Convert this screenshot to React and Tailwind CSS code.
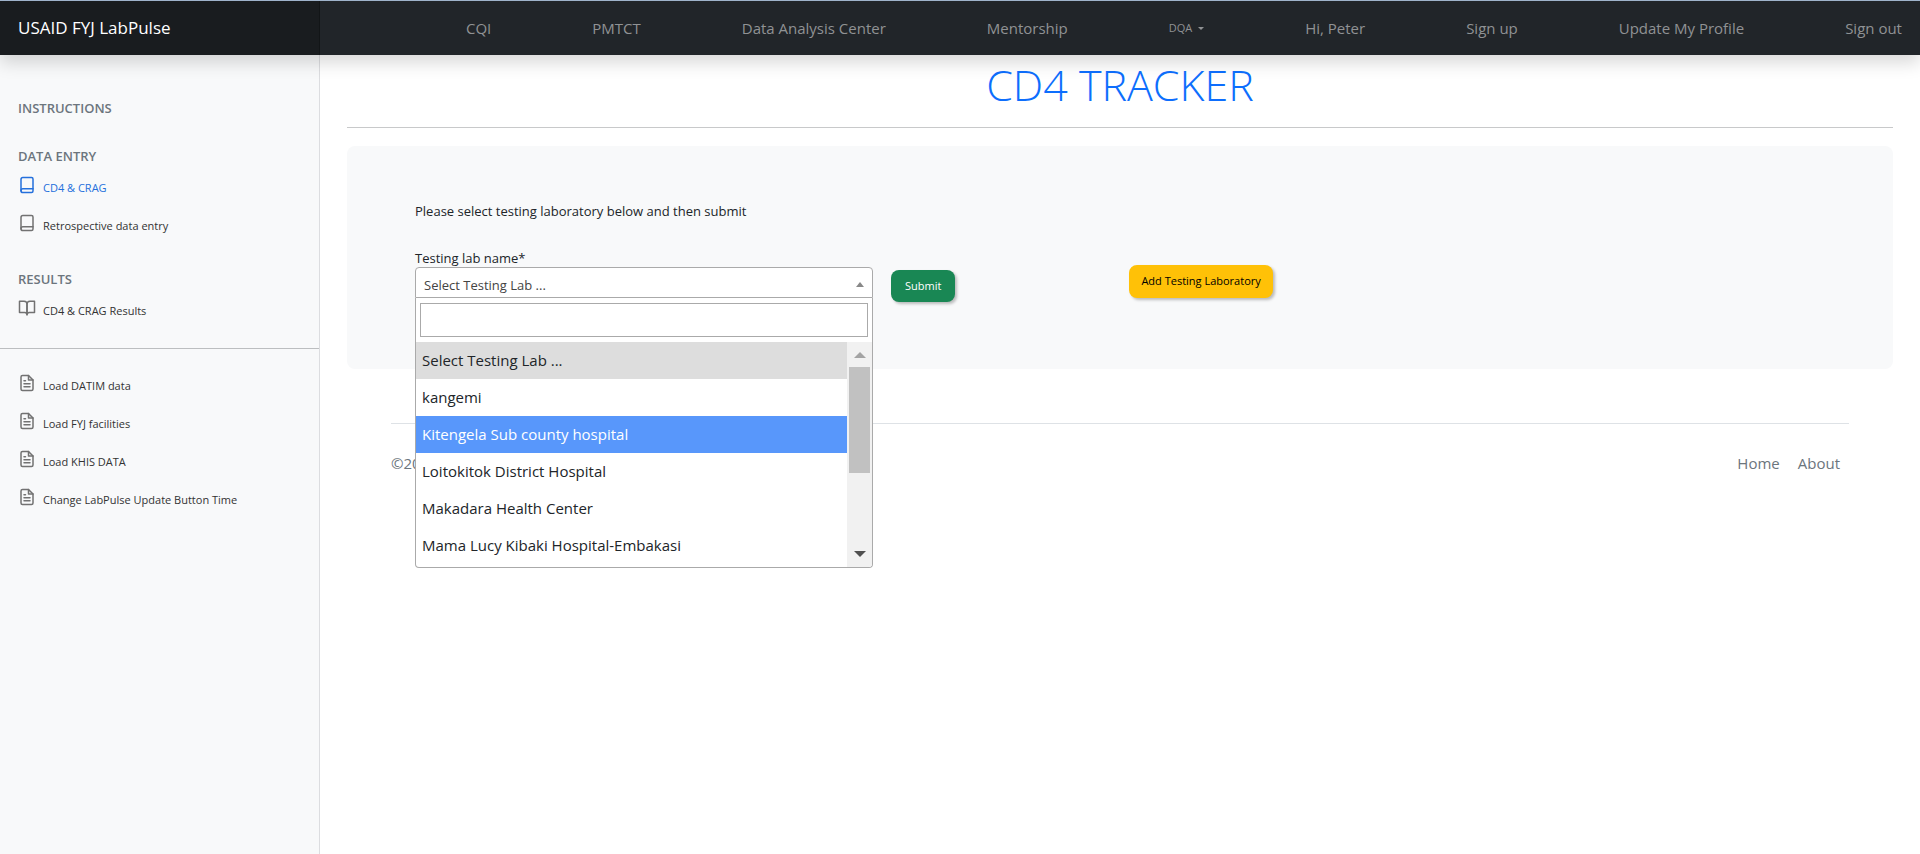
const navItems = ["CQI", "PMTCT", "Data Analysis Center", "Mentorship"];
const accountItems = ["Hi, Peter", "Sign up", "Update My Profile", "Sign out"];
const labs = [
  "Select Testing Lab ...",
  "kangemi",
  "Kitengela Sub county hospital",
  "Loitokitok District Hospital",
  "Makadara Health Center",
  "Mama Lucy Kibaki Hospital-Embakasi",
];

function Icon({ children }) {
  return (
    <svg
      className="size-[18px] shrink-0"
      viewBox="0 0 24 24"
      fill="none"
      stroke="currentColor"
      strokeWidth="2"
      strokeLinecap="round"
      strokeLinejoin="round"
      aria-hidden="true"
    >
      {children}
    </svg>
  );
}

function BookIcon() {
  return (
    <Icon>
      <path d="M4 19.5A2.5 2.5 0 0 1 6.5 17H20" />
      <path d="M6.5 2H18a2 2 0 0 1 2 2v16a2 2 0 0 1-2 2H6.5A2.5 2.5 0 0 1 4 19.5v-15A2.5 2.5 0 0 1 6.5 2z" />
    </Icon>
  );
}

function BookOpenIcon() {
  return (
    <Icon>
      <path d="M2 3h6a4 4 0 0 1 4 4v14a3 3 0 0 0-3-3H2z" />
      <path d="M22 3h-6a4 4 0 0 0-4 4v14a3 3 0 0 1 3-3h7z" />
    </Icon>
  );
}

function FileIcon() {
  return (
    <Icon>
      <path d="M14 2H6a2 2 0 0 0-2 2v16a2 2 0 0 0 2 2h12a2 2 0 0 0 2-2V8z" />
      <path d="M14 2v6h6M16 13H8M16 17H8M10 9H8" />
    </Icon>
  );
}

function SideLink({ icon, active, children }) {
  return (
    <li>
      <a href="#" className="flex h-[38px] items-start gap-[7px] px-[18px] pt-2">
        <span className={active ? "text-[#2470dc]" : "text-[#727272]"}>{icon}</span>
        <span className={active ? "pt-1 text-[#2470dc]" : "pt-1 text-[#333333]"}>{children}</span>
      </a>
    </li>
  );
}

function SideHeading({ children }) {
  return <h2 className="px-[18px] text-[13px] leading-4 font-semibold text-[#6c757d]">{children}</h2>;
}

export default function App() {
  return (
    <div className="flex min-h-screen flex-col bg-white font-['Open_Sans','Noto_Sans',sans-serif] text-[#212529]">
      <header className="relative z-10 flex h-[55px] border-t border-[#9fb3cb] bg-[#212529] shadow-[0_8px_16px_rgba(0,0,0,0.15)]">
        <a
          href="#"
          className="flex w-80 shrink-0 items-center bg-[#191c1f] px-[18px] text-[17px] text-white shadow-[inset_-1px_0_0_rgba(0,0,0,0.25)]"
        >
          USAID FYJ LabPulse
        </a>
        <nav className="flex grow items-center justify-between pr-[18px] pl-[146px] text-[15px] text-[#909294]">
          {navItems.map((item) => (
            <a key={item} href="#">{item}</a>
          ))}
          <button type="button" className="flex items-center gap-[6px] text-[11px]">
            DQA
            <span className="border-x-[3px] border-t-[3px] border-x-transparent border-t-current" />
          </button>
          {accountItems.map((item) => (
            <a key={item} href="#">{item}</a>
          ))}
        </nav>
      </header>

      <div className="flex grow">
        <aside className="w-80 shrink-0 border-r border-[#dcdde0] bg-[#f8f9fa] pt-[45px] text-[11px] leading-4">
          <SideHeading>INSTRUCTIONS</SideHeading>
          <div className="pt-8">
            <SideHeading>DATA ENTRY</SideHeading>
            <ul className="pt-1">
              <SideLink icon={<BookIcon />} active>CD4 &amp; CRAG</SideLink>
              <SideLink icon={<BookIcon />}>Retrospective data entry</SideLink>
            </ul>
          </div>
          <div className="pt-[27px]">
            <SideHeading>RESULTS</SideHeading>
            <ul className="pt-1">
              <SideLink icon={<BookOpenIcon />}>CD4 &amp; CRAG Results</SideLink>
            </ul>
          </div>
          <hr className="mt-[19px] border-[#bcbec0]" />
          <ul className="pt-[17px]">
            <SideLink icon={<FileIcon />}>Load DATIM data</SideLink>
            <SideLink icon={<FileIcon />}>Load FYJ facilities</SideLink>
            <SideLink icon={<FileIcon />}>Load KHIS DATA</SideLink>
            <SideLink icon={<FileIcon />}>Change LabPulse Update Button Time</SideLink>
          </ul>
        </aside>

        <div className="min-w-0 grow px-[27px]">
          <main>
            <h1 className="h-[73px] border-b border-[#c8c9ca] pt-1 text-center text-[43px] leading-[52px] font-light text-[#0d6efd]">
              CD4 TRACKER
            </h1>
            <form className="mt-[18px] flex h-[223px] rounded-lg bg-[#f8f9fa] px-[68px] pt-[56px]">
              <div className="w-[458px] text-[13px] leading-[18px]">
                <p>Please select testing laboratory below and then submit</p>
                <label htmlFor="lab" className="mt-[29px] block">Testing lab name*</label>
                <div className="relative">
                  <button
                    id="lab"
                    type="button"
                    className="flex h-[31px] w-full items-center justify-between rounded-t border border-[#aaaaaa] bg-white px-2 pt-1 text-[#444444]"
                  >
                    Select Testing Lab ...
                    <span className="border-x-4 border-b-[5px] border-x-transparent border-b-[#888888]" />
                  </button>
                  <div className="absolute inset-x-0 top-full overflow-hidden rounded-b border border-t-0 border-[#aaaaaa] bg-white">
                    <div className="p-1 pt-[5px] pb-[5px]">
                      <input
                        type="text"
                        aria-label="Search testing labs"
                        className="block h-[34px] w-full border border-[#aaaaaa] bg-white px-1"
                      />
                    </div>
                    <div className="flex h-[225px]">
                      <ul className="grow overflow-hidden text-[15px] leading-[37px]">
                        {labs.map((lab, i) => (
                          <li
                            key={lab}
                            className={
                              i === 0
                                ? "bg-[#dddddd] px-[6px]"
                                : i === 2
                                  ? "bg-[#5897fb] px-[6px] font-medium text-white"
                                  : "px-[6px]"
                            }
                          >
                            {lab}
                          </li>
                        ))}
                      </ul>
                      <div className="flex w-[25px] flex-col items-center justify-between bg-[#f1f1f1]">
                        <div className="flex h-[25px] items-center">
                          <span className="border-x-[6px] border-b-[6px] border-x-transparent border-b-[#a3a3a3]" />
                        </div>
                        <div className="h-[106px] w-[21px] bg-[#c1c1c1]" />
                        <div className="flex grow items-end pb-[10px]">
                          <span className="border-x-[6px] border-t-[6px] border-x-transparent border-t-[#505050]" />
                        </div>
                      </div>
                    </div>
                  </div>
                </div>
              </div>
              <button
                type="submit"
                className="mt-[68px] ml-[18px] h-8 rounded-lg bg-[#198754] px-[14px] text-[11px] text-white shadow-[2px_2px_3px_rgba(0,0,0,0.25)]"
              >
                Submit
              </button>
              <button
                type="button"
                className="mt-[63px] ml-[174px] h-[33px] rounded-lg bg-[#ffc107] px-3 text-[11px] text-black shadow-[2px_2px_3px_rgba(0,0,0,0.25)]"
              >
                Add Testing Laboratory
              </button>
            </form>
          </main>
          <footer className="mx-11 mt-[54px] flex justify-between border-t border-[#dee2e6] pt-[29px] pr-[9px] text-[15px] leading-5 text-[#6c757d]">
            <p>©2023</p>
            <nav className="flex gap-[18px]">
              <a href="#">Home</a>
              <a href="#">About</a>
            </nav>
          </footer>
        </div>
      </div>
    </div>
  );
}
